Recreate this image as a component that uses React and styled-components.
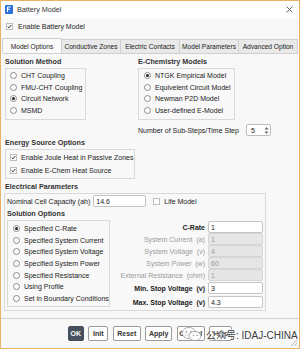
import React from 'react';
import styled, { createGlobalStyle } from 'styled-components';

const GlobalStyle = createGlobalStyle`
  body {
    margin: 0;
    background: #fff;
    font-family: "Liberation Sans", Arial, sans-serif;
  }
  * { box-sizing: border-box; }
`;

const tabs = ['Model Options', 'Conductive Zones', 'Electric Contacts', 'Model Parameters', 'Advanced Option'];
const methods = ['CHT Coupling', 'FMU-CHT Coupling', 'Circuit Network', 'MSMD'];
const chemModels = ['NTGK Empirical Model', 'Equivelent Circuit Model', 'Newman P2D Model', 'User-defined E-Model'];
const solutionOptions = [
    'Specified C-Rate',
    'Specified System Current',
    'Specified System Voltage',
    'Specified System Power',
    'Specified Resistance',
    'Using Profile',
    'Set in Boundary Conditions',
];
const fields = [
    { label: 'C-Rate', value: '1', on: true },
    { label: 'System Current  (a)', value: '1' },
    { label: 'System Voltage  (v)', value: '4' },
    { label: 'System Power  (w)', value: '60' },
    { label: 'External Resistance  (ohm)', value: '1' },
    { label: 'Min. Stop Voltage  (v)', value: '3', on: true, shift: 1 },
    { label: 'Max. Stop Voltage  (v)', value: '4.3', on: true, shift: 2 },
];
const buttons = [
    { text: 'OK', w: 16, primary: true },
    { text: 'Init', w: 20 },
    { text: 'Reset', w: 28 },
    { text: 'Apply', w: 27 },
    { text: 'Cancel', w: 28 },
    { text: 'Help', w: 23 },
];

const Radio = ({ checked }) => (
    <RadioDot $checked={checked} />
);

const Check = ({ checked }) => (
    <CheckBox>
        {checked && (
            <svg width="7" height="7" viewBox="0 0 7 7">
                <path d="M1 3.6 L2.8 5.4 L6 1.4" stroke="#222" strokeWidth="1.3" fill="none" />
            </svg>
        )}
    </CheckBox>
);

export default function App() {
    return (
        <>
            <GlobalStyle />
            <Window>
                <TitleBar>
                    <svg width="8" height="9" viewBox="0 0 8 9">
                        <rect width="8" height="9" rx="1" fill="#2b6fd8" />
                        <path d="M2.5 2 H5.8 M2.5 2 V7 M2.5 4.3 H5" stroke="#fff" strokeWidth="1.1" />
                    </svg>
                    <TitleText>Battery Model</TitleText>
                    <Close>
                        <svg width="7" height="7" viewBox="0 0 7 7">
                            <path d="M0.5 0.5 L6.5 6.5 M6.5 0.5 L0.5 6.5" stroke="#555" strokeWidth="0.9" />
                        </svg>
                    </Close>
                </TitleBar>

                <EnableRow>
                    <Check checked />
                    <Label>Enable Battery Model</Label>
                </EnableRow>

                <TabBar>
                    {tabs.map((t, i) => (
                        <Tab key={t} $active={i === 0}>{t}</Tab>
                    ))}
                </TabBar>

                <Panel>
                    <TopGrid>
                        <div>
                            <GroupTitle>Solution Method</GroupTitle>
                            <Box $w={81} $h={52}>
                                {methods.map((m, i) => (
                                    <Item key={m} $h={11.6}>
                                        <Radio checked={i === 2} />
                                        <Label>{m}</Label>
                                    </Item>
                                ))}
                            </Box>
                        </div>
                        <div>
                            <GroupTitle>E-Chemistry Models</GroupTitle>
                            <Box $w={97} $h={52}>
                                {chemModels.map((m, i) => (
                                    <Item key={m} $h={11.6} $pad={5}>
                                        <Radio checked={i === 0} />
                                        <Label>{m}</Label>
                                    </Item>
                                ))}
                            </Box>
                            <StepRow>
                                <Label>Number of Sub-Steps/Time Step</Label>
                                <Spinner>
                                    <span>5</span>
                                    <Arrows>
                                        <svg width="5" height="9" viewBox="0 0 5 9">
                                            <path d="M0.5 3.5 L2.5 1 L4.5 3.5 Z M0.5 5.5 L2.5 8 L4.5 5.5 Z" fill="#666" />
                                        </svg>
                                    </Arrows>
                                </Spinner>
                            </StepRow>
                        </div>
                    </TopGrid>

                    <GroupTitle $top={2}>Energy Source Options</GroupTitle>
                    <Box $w={130} $h={30}>
                        <Item $h={13}>
                            <Check checked />
                            <Label>Enable Joule Heat in Passive Zones</Label>
                        </Item>
                        <Item $h={13}>
                            <Check checked />
                            <Label>Enable E-Chem Heat Source</Label>
                        </Item>
                    </Box>

                    <GroupTitle $top={3}>Electrical Parameters</GroupTitle>
                    <ElecBox>
                        <NominalRow>
                            <Label>Nominal Cell Capacity  (ah)</Label>
                            <Input $w={53} $on>14.6</Input>
                            <LifeModel>
                                <Check />
                                <Label>Life Model</Label>
                            </LifeModel>
                        </NominalRow>
                        <GroupTitle $top={2}>Solution Options</GroupTitle>
                        <OptionsGrid>
                            <Box $w={103} $h={87} $pad={1.5}>
                                {solutionOptions.map((o, i) => (
                                    <Item key={o} $h={11.7} $pad={5}>
                                        <Radio checked={i === 0} />
                                        <Label>{o}</Label>
                                    </Item>
                                ))}
                            </Box>
                            <Fields>
                                {fields.map(f => (
                                    <FieldRow key={f.label} $shift={f.shift || 0}>
                                        <FieldLabel $on={f.on}>{f.label}</FieldLabel>
                                        <Input $w={55} $on={f.on}>{f.value}</Input>
                                    </FieldRow>
                                ))}
                            </Fields>
                        </OptionsGrid>
                    </ElecBox>
                </Panel>

                <Footer>
                    {buttons.map(b => (
                        <Button key={b.text} $w={b.w} $primary={b.primary}>{b.text}</Button>
                    ))}
                </Footer>

                <Watermark>
                    <svg width="22" height="16" viewBox="0 0 22 16">
                        <ellipse cx="8" cy="7" rx="7" ry="5.5" fill="rgba(255,255,255,0.85)" stroke="#9a9a9a" strokeWidth="0.8" />
                        <ellipse cx="14" cy="10" rx="6" ry="4.6" fill="rgba(255,255,255,0.9)" stroke="#9a9a9a" strokeWidth="0.8" />
                        <circle cx="5.5" cy="5.5" r="0.8" fill="#9a9a9a" />
                        <circle cx="10" cy="5.5" r="0.8" fill="#9a9a9a" />
                        <circle cx="12.5" cy="9.5" r="0.7" fill="#9a9a9a" />
                        <circle cx="16" cy="9.5" r="0.7" fill="#9a9a9a" />
                    </svg>
                    <span>公众号: IDAJ-CHINA</span>
                </Watermark>
                <Grip>
                    <svg width="8" height="8" viewBox="0 0 8 8">
                        <path d="M7 1 L1 7 M7 4 L4 7 M7 6.5 L6.5 7" stroke="#aaa" strokeWidth="0.8" />
                    </svg>
                </Grip>
            </Window>
        </>
    );
}

const Window = styled.div`
    position: relative;
    width: 300px;
    height: 349px;
    border: 1px solid #eab36a;
    background: #f8f8f8;
    display: flex;
    flex-direction: column;
    overflow: hidden;
    color: #222;
    font-size: 7px;
`;

const TitleBar = styled.div`
    height: 17px;
    background: #fff;
    display: flex;
    align-items: center;
    padding: 0 4px;
    gap: 4px;
`;

const TitleText = styled.span`
    font-size: 7.2px;
    color: #333;
    flex: 1;
`;

const Close = styled.span`
    display: flex;
    margin-right: 2px;
`;

const EnableRow = styled.div`
    height: 16px;
    display: flex;
    align-items: center;
    gap: 5px;
    padding-left: 5px;
`;

const Label = styled.span`
    font-size: 7px;
    color: #222;
    white-space: nowrap;
`;

const TabBar = styled.div`
    display: flex;
    height: 15px;
    margin: 5px 1px 0 2px;
    border-bottom: 1px solid #cfcfcf;
`;

const Tab = styled.div`
    flex: 1;
    display: flex;
    align-items: center;
    justify-content: center;
    font-size: 6.6px;
    color: #222;
    white-space: nowrap;
    border: 1px solid #cfcfcf;
    border-bottom: none;
    margin-left: -1px;
    background: ${p => (p.$active ? '#fafafa' : '#e9e9e9')};
    height: ${p => (p.$active ? '15px' : '14px')};
    align-self: flex-end;
`;

const Panel = styled.div`
    flex: 1;
    display: flex;
    flex-direction: column;
    padding: 3px 4px 0 4px;
`;

const TopGrid = styled.div`
    display: grid;
    grid-template-columns: 133px 1fr;
`;

const GroupTitle = styled.div`
    font-weight: bold;
    font-size: 7.2px;
    color: #333;
    height: 11px;
    line-height: 10px;
    margin-top: ${p => p.$top || 0}px;
    white-space: nowrap;
`;

const Box = styled.div`
    width: ${p => p.$w}px;
    height: ${p => p.$h}px;
    border: 1px solid #d9d9d9;
    padding-top: ${p => p.$pad ?? 1}px;
`;

const Item = styled.div`
    height: ${p => p.$h}px;
    display: flex;
    align-items: center;
    gap: 4px;
    padding-left: ${p => p.$pad ?? 4}px;
`;

const RadioDot = styled.span`
    width: 7px;
    height: 7px;
    border-radius: 50%;
    border: 1px solid #8c8c8c;
    background: #fff;
    display: flex;
    align-items: center;
    justify-content: center;
    flex-shrink: 0;

    &::after {
        content: '';
        width: 3px;
        height: 3px;
        border-radius: 50%;
        background: ${p => (p.$checked ? '#222' : 'transparent')};
    }
`;

const CheckBox = styled.span`
    width: 7px;
    height: 7px;
    border: 1px solid #bdbdbd;
    background: #fff;
    display: flex;
    align-items: center;
    justify-content: center;
    flex-shrink: 0;
`;

const StepRow = styled.div`
    height: 12px;
    margin-top: 4px;
    display: flex;
    align-items: center;
    gap: 4px;
`;

const Spinner = styled.div`
    width: 25px;
    height: 12px;
    border: 1px solid #bdbdbd;
    border-radius: 2px;
    background: #fff;
    display: flex;
    align-items: center;
    justify-content: space-between;
    padding: 0 1px 0 4px;
    margin-left: 3px;
`;

const Arrows = styled.span`
    display: flex;
`;

const ElecBox = styled.div`
    width: 262px;
    height: 118px;
    margin-left: -1px;
    border: 1px solid #d9d9d9;
    padding: 1px 2px 0 2px;
`;

const NominalRow = styled.div`
    height: 12px;
    display: flex;
    align-items: center;
    gap: 3px;
`;

const LifeModel = styled.div`
    display: flex;
    align-items: center;
    gap: 4px;
    margin-left: 4px;
`;

const Input = styled.div`
    width: ${p => p.$w}px;
    height: 12px;
    border: 1px solid ${p => (p.$on ? '#c4c4c4' : '#d6d6d6')};
    border-radius: 2px;
    background: ${p => (p.$on ? '#fff' : '#e6e6e6')};
    color: ${p => (p.$on ? '#222' : '#9a9a9a')};
    font-size: 7px;
    display: flex;
    align-items: center;
    padding-left: 2px;
    flex-shrink: 0;
`;

const OptionsGrid = styled.div`
    display: flex;
    gap: 2px;
`;

const Fields = styled.div`
    flex: 1;
    display: flex;
    flex-direction: column;
    padding-top: 1px;
`;

const FieldRow = styled.div`
    height: 12px;
    margin-top: ${p => p.$shift}px;
    display: flex;
    align-items: center;
    justify-content: flex-end;
    gap: 3px;
`;

const FieldLabel = styled.span`
    font-size: 7px;
    white-space: pre;
    color: ${p => (p.$on ? '#222' : '#9a9a9a')};
    font-weight: ${p => (p.$on ? 'bold' : 'normal')};
`;

const Footer = styled.div`
    height: 30px;
    border-top: 1px solid #d2d2d2;
    display: flex;
    align-items: center;
    justify-content: center;
    gap: 4.5px;
    padding-bottom: 1px;
`;

const Button = styled.div`
    width: ${p => p.$w}px;
    height: 15px;
    border: 1px solid ${p => (p.$primary ? '#444c59' : '#9b9b9b')};
    border-radius: 2px;
    background: ${p => (p.$primary ? '#49515e' : '#fff')};
    color: ${p => (p.$primary ? '#fff' : '#333')};
    font-weight: bold;
    font-size: 7px;
    display: flex;
    align-items: center;
    justify-content: center;
`;

const Watermark = styled.div`
    position: absolute;
    left: 180px;
    top: 325px;
    display: flex;
    align-items: center;
    gap: 3px;
    font-family: "Liberation Sans", "Noto Sans CJK SC", sans-serif;
    font-size: 10px;
    color: #3a3a3a;
    text-shadow: 0 0 2px #fff, 0 0 2px #fff;
    white-space: nowrap;
`;

const Grip = styled.div`
    position: absolute;
    right: 1px;
    bottom: 1px;
    display: flex;
`;
